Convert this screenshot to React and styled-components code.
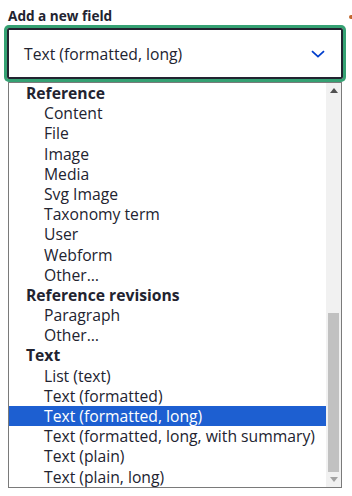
import React from 'react';
import styled, { createGlobalStyle } from 'styled-components';

const GlobalStyle = createGlobalStyle`
    body {
        margin: 0;
        background: #ffffff;
        font-family: "Open Sans", "Noto Sans", sans-serif;
        color: #222330;
    }
`

const groups = [
    { label: 'Reference', options: ['Content', 'File', 'Image', 'Media', 'Svg Image', 'Taxonomy term', 'User', 'Webform', 'Other…'] },
    { label: 'Reference revisions', options: ['Paragraph', 'Other…'] },
    { label: 'Text', options: ['List (text)', 'Text (formatted)', 'Text (formatted, long)', 'Text (formatted, long, with summary)', 'Text (plain)', 'Text (plain, long)'] },
]

const selected = 'Text (formatted, long)';

function App() {
    return (
        <StPage>
            <GlobalStyle />
            <StHeader>
                <StLabel>Add a new field</StLabel>
                <StMarker />
            </StHeader>

            <StSelect>
                <StValue>{selected}</StValue>
                <svg width="14" height="8" viewBox="0 0 14 8">
                    <path d="M1 1.2 L7 6.6 L13 1.2" fill="none" stroke="#003ecc" strokeWidth="1.8" />
                </svg>
            </StSelect>

            <StList>
                <StOptions>
                    {groups.map(g => (
                        <React.Fragment key={g.label}>
                            <StGroup>{g.label}</StGroup>
                            {g.options.map((o, i) => (
                                <StOption key={g.label + i} $active={g.label === 'Text' && o === selected}>{o}</StOption>
                            ))}
                        </React.Fragment>
                    ))}
                </StOptions>
                <StScrollbar>
                    <StArrow>
                        <svg width="8" height="5" viewBox="0 0 8 5"><path d="M0 5 L4 0 L8 5 Z" fill="#505050" /></svg>
                    </StArrow>
                    <StTrack>
                        <StThumb />
                    </StTrack>
                    <StArrow>
                        <svg width="8" height="5" viewBox="0 0 8 5"><path d="M0 0 L4 5 L8 0 Z" fill="#a3a3a3" /></svg>
                    </StArrow>
                </StScrollbar>
            </StList>
        </StPage>
    );
}

export default App;

const StPage = styled.div`
    width : 352px;
    padding-top : 6px;
    overflow : hidden;
`
const StHeader = styled.div`
    display : flex;
    justify-content : space-between;
    align-items : center;
    padding-left : 8px;
    height : 20px;
    margin-bottom : 2px;
`
const StLabel = styled.label`
    font-size : 13.6px;
    font-weight : 700;
    line-height : 20px;
`
const StMarker = styled.span`
    width : 3px;
    height : 4px;
    margin-top : 1px;
    border-radius : 2px 0 0 2px;
    background : #c2662e;
`
const StSelect = styled.div`
    display : flex;
    align-items : center;
    justify-content : space-between;
    box-sizing : border-box;
    margin-left : 7px;
    width : 336px;
    height : 51px;
    padding : 0 16px 0 15px;
    border : 2px solid #222330;
    border-radius : 2px;
    box-shadow : 0 0 0 3px #35a173;
`
const StValue = styled.span`
    font-size : 15.7px;
`
const StList = styled.div`
    display : flex;
    box-sizing : border-box;
    margin : 3px 0 0 8px;
    width : 334px;
    height : 406px;
    border : 1px solid #7a7a7a;
`
const StOptions = styled.div`
    flex : 1;
    display : flex;
    flex-direction : column;
`
const StGroup = styled.div`
    height : 20.2px;
    line-height : 20.2px;
    padding-left : 17px;
    font-size : 15.7px;
    font-weight : 700;
`
const StOption = styled.div`
    height : 20.2px;
    line-height : 20.2px;
    padding-left : 35px;
    font-size : 15.7px;
    white-space : nowrap;
    background : ${p => p.$active ? '#1d5fd1' : 'transparent'};
    color : ${p => p.$active ? '#ffffff' : '#222330'};
`
const StScrollbar = styled.div`
    width : 15px;
    display : flex;
    flex-direction : column;
    background : #f1f1f1;
`
const StArrow = styled.div`
    height : 15px;
    display : flex;
    align-items : center;
    justify-content : center;
`
const StTrack = styled.div`
    flex : 1;
    display : flex;
    flex-direction : column;
    justify-content : flex-end;
    padding : 0 2px 0 2px;
`
const StThumb = styled.div`
    height : 159px;
    background : #c1c1c1;
`
